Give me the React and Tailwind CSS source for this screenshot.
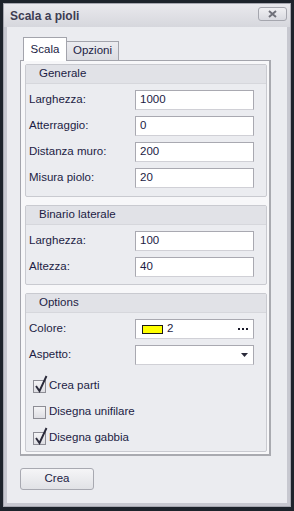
import React from 'react';

const font = { fontFamily: '"Liberation Sans", Arial, sans-serif' };

const Field = ({ label, value }) => (
  <div className="flex items-center h-[20px]">
    <span className="w-[106px] text-[11.5px] text-[#1c1c44]">{label}</span>
    <div className="w-[119px] h-[20px] bg-white border border-[#a9a9b1] border-b-[#d0d0d6] flex items-center px-[4px] text-[11.5px] text-[#1c1c44]">
      {value}
    </div>
  </div>
);

const Group = ({ title, children, className = '' }) => (
  <div className={`border border-[#c9cad0] rounded-[2px] bg-[#ebecf0] ${className}`}>
    <div className="h-[19px] bg-[#e1e2e7] border-b border-[#d6d7dc] flex items-center pl-[13px] text-[11.5px] text-[#1c1c44]">
      {title}
    </div>
    <div className="flex flex-col gap-[6px] pl-[3px] pt-[6px]">{children}</div>
  </div>
);

const Check = ({ checked, label }) => (
  <div className="flex items-center h-[20px] pl-[4px]">
    <div className="relative w-[13px] h-[13px] border border-[#8d8d95] bg-gradient-to-b from-[#f4f4f6] to-[#dedee3]">
      {checked && (
        <svg className="absolute left-[0px] top-[-6px]" width="14" height="18" viewBox="0 0 14 18">
          <path d="M2 11 L5.5 16 L12.5 1" fill="none" stroke="#2a2a3a" strokeWidth="1.9" />
        </svg>
      )}
    </div>
    <span className="ml-[3px] text-[11.5px] text-[#1c1c44]">{label}</span>
  </div>
);

export default function App() {
  return (
    <div className="w-[294px] h-[511px] bg-[#1d232b] pt-[3px] pl-[3px] pr-[3px] pb-[4px]" style={font}>
      <div className="w-full h-full flex flex-col bg-[#c7c8d0] border border-[#a6a7b0]">
        {/* barra del titolo */}
        <div className="h-[23px] flex items-center justify-between pl-[6px] pr-[3px] bg-gradient-to-b from-[#e9e9ed] to-[#d6d7dd]">
          <span className="font-bold text-[12px] text-[#3d3d52]">Scala a pioli</span>
          <div className="w-[29px] h-[14px] mt-[-3px] rounded-[3px] border border-[#a5a6ae] bg-gradient-to-b from-[#f0f0f3] to-[#d9dae0] flex items-center justify-center">
            <svg width="9" height="8" viewBox="0 0 9 8">
              <path d="M1 1 L8 7 M8 1 L1 7" stroke="#6f7079" strokeWidth="2" />
            </svg>
          </div>
        </div>

        <div className="flex-1 mx-[3px] mb-[3px] bg-[#ebecf0] flex flex-col pl-[13px] pr-[16px] pt-[10px]">
          {/* schede */}
          <div className="flex items-end h-[23px] pl-[3px]">
            <div className="h-[24px] w-[44px] bg-white border border-[#a3a4ac] border-b-0 flex items-center justify-center text-[11.5px] text-[#1c1c44] relative z-10 mb-[-1px]">
              Scala
            </div>
            <div className="h-[19px] w-[52px] bg-gradient-to-b from-[#ececf0] to-[#dcdde2] border border-[#a3a4ac] border-l-0 border-b-0 flex items-center justify-center text-[11.5px] text-[#1c1c44]">
              Opzioni
            </div>
          </div>

          <div className="h-[396px] bg-[#f7f7f9] border border-[#a3a4ac] border-r-2 border-b-2 border-r-[#a9aab0] border-b-[#a9aab0] pt-[3px] pl-[4px] pr-[2px] flex flex-col gap-[8px]">
            <Group title="Generale" className="h-[133px]">
              <Field label="Larghezza:" value="1000" />
              <Field label="Atterraggio:" value="0" />
              <Field label="Distanza muro:" value="200" />
              <Field label="Misura piolo:" value="20" />
            </Group>

            <Group title="Binario laterale" className="h-[80px]">
              <Field label="Larghezza:" value="100" />
              <Field label="Altezza:" value="40" />
            </Group>

            <Group title="Options" className="h-[159px]">
              <div className="flex items-center h-[20px]">
                <span className="w-[106px] text-[11.5px] text-[#1c1c44]">Colore:</span>
                <div className="w-[119px] h-[20px] bg-white border border-[#a9a9b1] border-b-[#d0d0d6] flex items-center pl-[6px] pr-[5px] text-[11.5px] text-[#1c1c44]">
                  <div className="w-[21px] h-[9px] bg-[#ffff00] border border-[#1a1a1a]" />
                  <span className="ml-[4px] flex-1">2</span>
                  <div className="flex gap-[2px]">
                    <span className="w-[2px] h-[2px] bg-[#1a1a2a]" />
                    <span className="w-[2px] h-[2px] bg-[#1a1a2a]" />
                    <span className="w-[2px] h-[2px] bg-[#1a1a2a]" />
                  </div>
                </div>
              </div>
              <div className="flex items-center h-[20px]">
                <span className="w-[106px] text-[11.5px] text-[#1c1c44]">Aspetto:</span>
                <div className="w-[119px] h-[20px] bg-white border border-[#a9a9b1] border-b-[#d0d0d6] flex items-center justify-end pr-[5px]">
                  <svg width="7" height="4" viewBox="0 0 7 4">
                    <path d="M0 0 H7 L3.5 4 Z" fill="#2a2a3a" />
                  </svg>
                </div>
              </div>
              <div className="flex flex-col gap-[6px] mt-[5px]">
                <Check checked label="Crea parti" />
                <Check label="Disegna unifilare" />
                <Check checked label="Disegna gabbia" />
              </div>
            </Group>
          </div>

          <div className="mt-[9px]">
            <button className="w-[74px] h-[22px] rounded-[3px] border border-[#a8a9b1] bg-gradient-to-b from-[#f5f5f7] to-[#e1e2e6] text-[11.5px] text-[#1c1c44]">
              Crea
            </button>
          </div>
        </div>
      </div>
    </div>
  );
}
